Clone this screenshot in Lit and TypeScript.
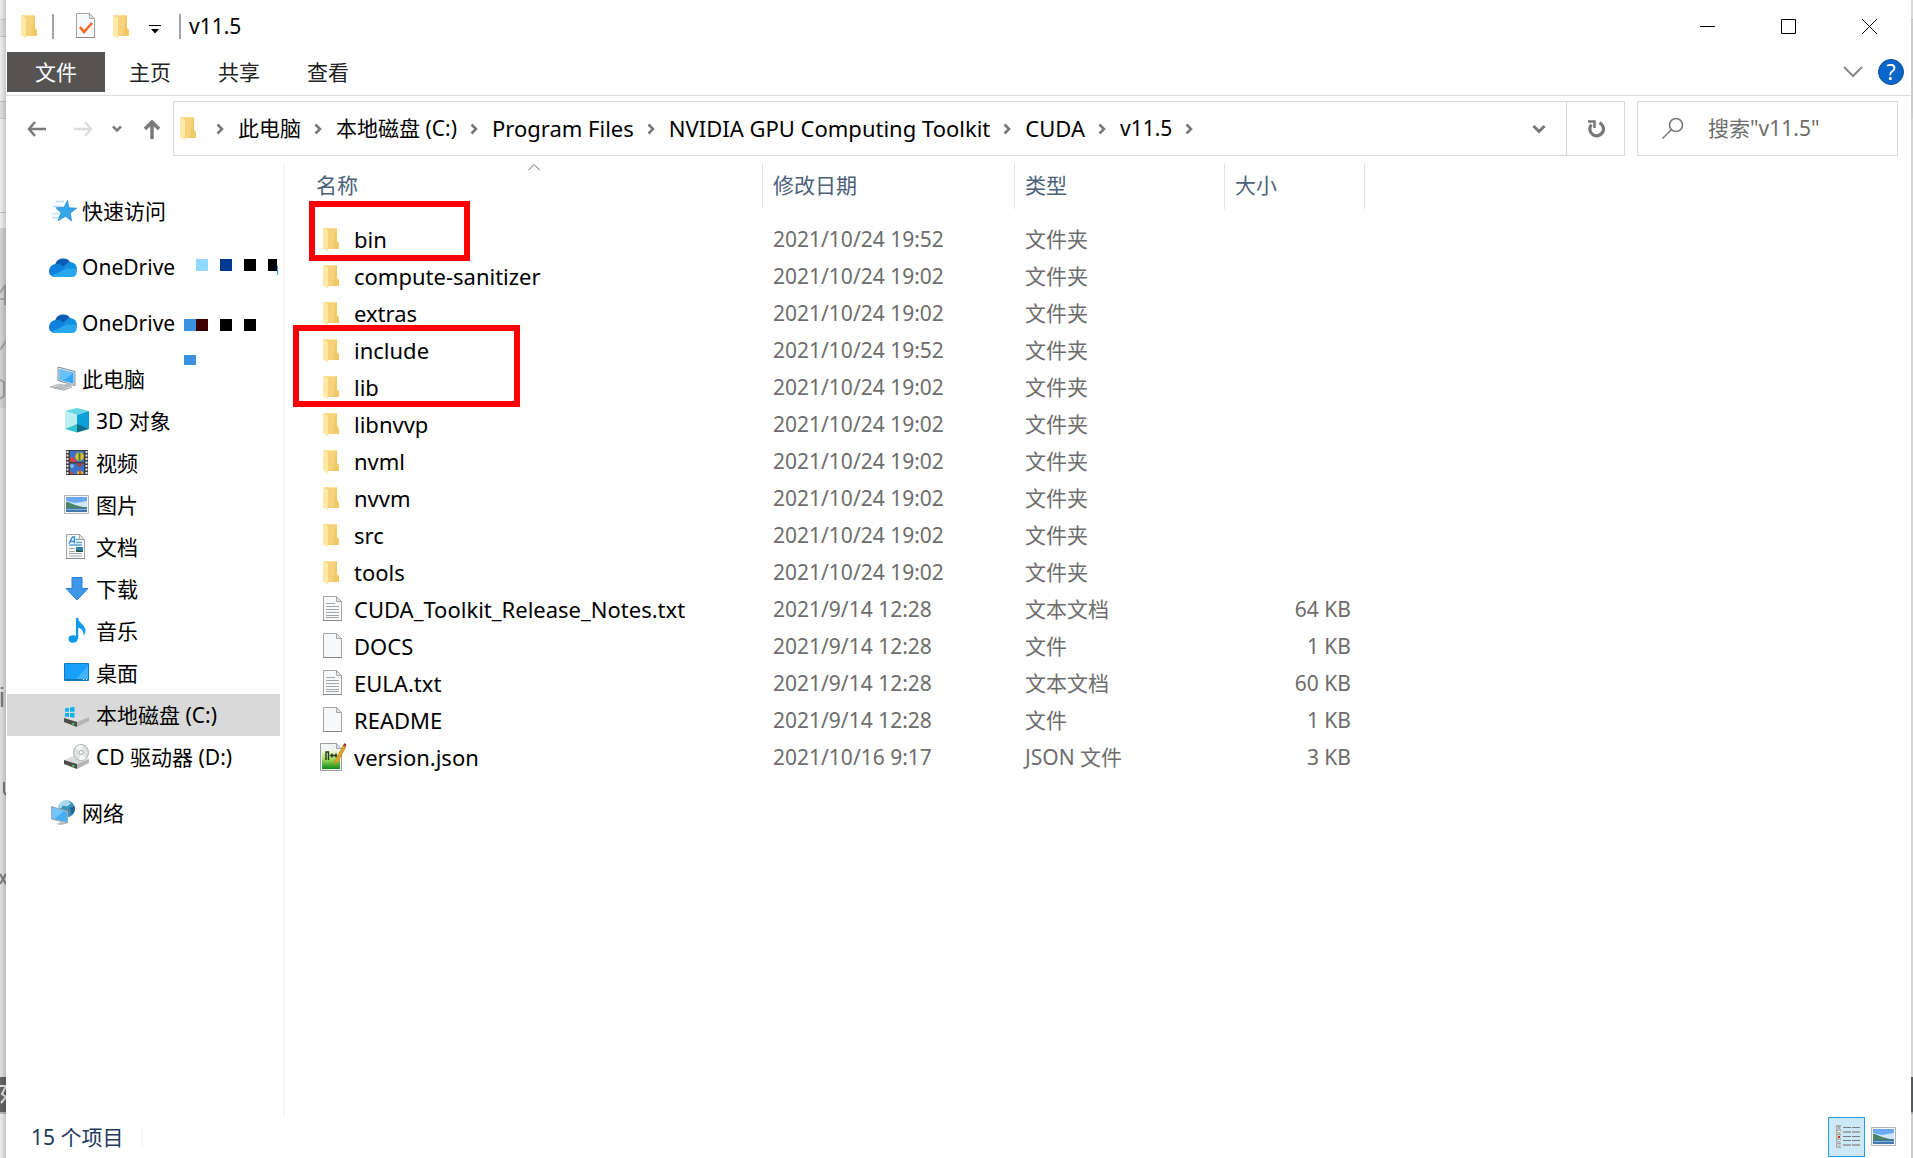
import { LitElement, html, svg, css, nothing, TemplateResult } from "lit";
import { customElement, property, state } from "lit/decorators.js";
import { classMap } from "lit/directives/class-map.js";

type Kind = "folder" | "text" | "blank" | "npp";

interface Entry {
  name: string;
  date: string;
  type: string;
  size?: string;
  kind: Kind;
}

interface Place {
  label: string;
  icon: string;
  group?: boolean;
  mosaic?: string;
}

interface Crumb {
  label: string;
  latin?: boolean;
}

const ENTRIES: Entry[] = [
  { name: "bin", date: "2021/10/24 19:52", type: "文件夹", kind: "folder" },
  { name: "compute-sanitizer", date: "2021/10/24 19:02", type: "文件夹", kind: "folder" },
  { name: "extras", date: "2021/10/24 19:02", type: "文件夹", kind: "folder" },
  { name: "include", date: "2021/10/24 19:52", type: "文件夹", kind: "folder" },
  { name: "lib", date: "2021/10/24 19:02", type: "文件夹", kind: "folder" },
  { name: "libnvvp", date: "2021/10/24 19:02", type: "文件夹", kind: "folder" },
  { name: "nvml", date: "2021/10/24 19:02", type: "文件夹", kind: "folder" },
  { name: "nvvm", date: "2021/10/24 19:02", type: "文件夹", kind: "folder" },
  { name: "src", date: "2021/10/24 19:02", type: "文件夹", kind: "folder" },
  { name: "tools", date: "2021/10/24 19:02", type: "文件夹", kind: "folder" },
  { name: "CUDA_Toolkit_Release_Notes.txt", date: "2021/9/14 12:28", type: "文本文档", size: "64 KB", kind: "text" },
  { name: "DOCS", date: "2021/9/14 12:28", type: "文件", size: "1 KB", kind: "blank" },
  { name: "EULA.txt", date: "2021/9/14 12:28", type: "文本文档", size: "60 KB", kind: "text" },
  { name: "README", date: "2021/9/14 12:28", type: "文件", size: "1 KB", kind: "blank" },
  { name: "version.json", date: "2021/10/16 9:17", type: "JSON 文件", size: "3 KB", kind: "npp" },
];

const PLACES: Place[] = [
  { label: "快速访问", icon: "star", group: true },
  { label: "OneDrive", icon: "cloud", group: true, mosaic: "a" },
  { label: "OneDrive", icon: "cloud", group: true, mosaic: "b" },
  { label: "此电脑", icon: "pc", group: true },
  { label: "3D 对象", icon: "cube" },
  { label: "视频", icon: "video" },
  { label: "图片", icon: "picture" },
  { label: "文档", icon: "document" },
  { label: "下载", icon: "download" },
  { label: "音乐", icon: "music" },
  { label: "桌面", icon: "desktop" },
  { label: "本地磁盘 (C:)", icon: "disk" },
  { label: "CD 驱动器 (D:)", icon: "cd" },
  { label: "网络", icon: "network", group: true },
];

const CRUMBS: Crumb[] = [
  { label: "此电脑" },
  { label: "本地磁盘 (C:)" },
  { label: "Program Files", latin: true },
  { label: "NVIDIA GPU Computing Toolkit", latin: true },
  { label: "CUDA", latin: true },
  { label: "v11.5" },
];

const page = svg`
  <path d="M3.500 1.500h13l5 5v19h-18z" fill="#f8f9fa" stroke="#a3a5a7"/>
  <path d="M16.500 1.500v5h5z" fill="#e3e5e7" stroke="#a3a5a7"/>
  <path d="M3 25.500h19" stroke="#858789"/>`;

const ICONS: Record<string, TemplateResult> = {
  folder: svg`
    <path d="M4 3h13v17l2 0v4h-12z" fill="#f5d27b"/>
    <path d="M16 3h1v13l2 2v6h-6z" fill="#efc965"/>
    <path d="M3 3l5 2.500v21l-5-3z" fill="#ffe9a8"/>
    <path d="M3 3h14v1h-12z" fill="#fbe092"/>`,
  blank: page,
  text: svg`${page}<path d="M6 8.500h9M6 11.500h13M6 14.500h13M6 17.500h13M6 20.500h13M6 22.500h13" stroke="#a4a6a8"/>`,
  task: svg`${page}<path d="M7 15l4 5 8-9" fill="none" stroke="#f36b21" stroke-width="2.600"/>`,
  npp: svg`
    <defs><linearGradient id="g" x1="0" y1="0" x2="0" y2="1"><stop offset="0" stop-color="#f4faee"/><stop offset=".45" stop-color="#a9e05c"/><stop offset="1" stop-color="#0d8a1c"/></linearGradient></defs>
    <path d="M.5.5h16l5 5v22h-21z" fill="#f3f4f4" stroke="#9c9e9c"/>
    <rect x="2" y="7" width="18" height="19" fill="url(#g)"/>
    <path d="M16.500.5v5h5" fill="#ddd" stroke="#a0a0a0"/>
    <path d="M6 17V9h2.500v8M10 12.500h4M12 10.500v4M14 12.500h3M16 10.500v4" fill="none" stroke="#253320" stroke-width="1.400"/>
    <path d="M14 22l1.500-5L23.500 2l2.500 1.500-8 15z" fill="#eaa224" stroke="#b77a1a" stroke-width=".6"/>
    <path d="M23 2.500l1.500-2.500 2 1.500-1.200 2.500z" fill="#9b3c3c"/>`,
  star: svg`
    <path d="M7 4.500h8M4 9.500h10M3 16.500h7M3 20.500h7" stroke="#b7dcf4" stroke-width="1.500"/>
    <path d="M18.500 3.500l1.300 7.200 8 .5-6.500 4.800 1.200 7.800-6-4.500-7.500 4.500 3-8-5-5 8-.4z" fill="#35a5ea" stroke="#2b8ed2" stroke-width=".8"/>`,
  cloud: svg`
    <path d="M6 12A8.500 8.500 0 0 1 21.500 9.500L23 14l-9 3z" fill="#0a5cb5"/>
    <path d="M0 18.500C0 14 3.500 10.800 7.500 11c2-.2 4 .3 5.500 1.300l6 4-15 7.200C1.500 23 0 21 0 18.500z" fill="#1180dc"/>
    <path d="M14.500 14.500c1.500-3.500 4.500-5.500 7.500-5.200 3.300.3 6 3 6 6.700l-6 4z" fill="#1390e4"/>
    <path d="M2.500 23L17 15.500l10.600.5c1.200 3.500-.6 8-4.600 8H6c-1.500 0-2.600-.3-3.500-1z" fill="#2aa8ee"/>`,
  pc: svg`
    <path d="M9 2l17 4.500v14L9 15.500z" fill="#e6eaed" stroke="#7e8990"/>
    <path d="M10.500 4l14 3.700v11l-14-4z" fill="#36a8f5"/>
    <path d="M10.500 4l14 3.700-10 7.800-4-1z" fill="#69c1fb"/>
    <path d="M14 20l6-2 6 1-6 3z" fill="#b9bfc4"/>
    <path d="M1 22l9-3 13 3-8 3.500z" fill="#d2d6d9" stroke="#989fa5" stroke-width=".6"/>
    <path d="M4 22l12 2.500M7 21l12 2.500M5 23.500l9-3.300M9 24.300l9-3" stroke="#989fa5" stroke-width=".6"/>`,
  cube: svg`
    <path d="M14 1l12 3-12 4L2 4z" fill="#63d7e4"/>
    <path d="M2 4l12 4v11L2 22z" fill="#bdeff0"/>
    <path d="M26 4L14 8v11l12 3z" fill="#0a9fd8"/>
    <path d="M2 22l12-5v8.500z" fill="#35c4cd"/>
    <path d="M26 22l-12-5v8.500z" fill="#0b6b88"/>`,
  video: svg`
    <path d="M3 1h22v25H3z" fill="#3e3f41"/>
    <path d="M4.500 2v24M23.500 2v24" stroke="#e8e8e8" stroke-width="2" stroke-dasharray="2 1.500"/>
    <path d="M7 2h14v11H7zM7 14.500h14V25H7z" fill="#3c6ecb"/>
    <circle cx="16.500" cy="7.500" r="4.300" fill="#e8bd2a"/><path d="M15.500 3.500h2v8h-2z" fill="#3a8a37"/>
    <path d="M7 9l3-1 4 5H7z" fill="#e04040"/><path d="M13 14.500h7l-3 4z" fill="#b83a2e"/>
    <circle cx="9" cy="17" r="2" fill="#7fb5f2"/>
    <path d="M13.800 25a3.200 3.200 0 0 1 6.400 0z" fill="#e8bd2a"/><path d="M7 22l4 3H7z" fill="#e04040"/>
    <path d="M16.200 21.800h1.600V25h-1.600z" fill="#c23b2c"/>`,
  picture: svg`
    <path d="M1.500 4.500h24v18h-24z" fill="#f7f7f7" stroke="#b1b1b3"/>
    <path d="M3 6h21v15H3z" fill="#cfe7fb"/>
    <path d="M3 6h21v4l-12 2-9-2z" fill="#6ca7f3"/>
    <path d="M3 16h21v5H3z" fill="#3f78ae"/>
    <path d="M3 11c4 0 6 2 9 3l12 3H3z" fill="#4a8463"/>
    <path d="M3 18h21v1H3z" fill="#86b3d4"/>`,
  document: svg`
    ${page}
    <path d="M6 10.500l3.500-6.500h2v6.500M7.500 8.500h4" fill="none" stroke="#2f8fd6" stroke-width="1.400"/>
    <path d="M13 6.500h3M13 9.500h6M6 12h13" stroke="#5da7dc" stroke-width="1.400"/>
    <path d="M6 15.500h6M6 18.500h6M6 20.500h13M6 23h13" stroke="#a4a6a8"/>
    <path d="M13 14h7v5h-7z" fill="#2e7fae"/><path d="M13 17l7 1v1h-7z" fill="#28543d"/>`,
  download: svg`<path d="M9 2.500h10v11h6L14 25 3 13.500h6z" fill="#3f97e8" stroke="#2b7fd0"/>`,
  music: svg`
    <ellipse cx="10" cy="22" rx="4.500" ry="3.700" fill="#0a9bf0"/>
    <path d="M13 1h2.200c0 5 7.300 6.500 7.300 12.500 0 2.500-.8 4-2 5.500.8-5-2.300-7.500-5.300-8.500v11.500H13z" fill="#0a9bf0"/>`,
  desktop: svg`
    <path d="M1.500 4.500h24v17h-24z" fill="#17a0fb" stroke="#1679bd"/>
    <path d="M12 21L25 7v14z" fill="#42b3fc"/><path d="M2 20.500h23" stroke="#1a74b0"/><path d="M20 20.500h1M23 20.500h1" stroke="#fff"/>`,
  disk: svg`
    <path d="M1 17l12-5 13 4-12 5z" fill="#dcdcdd"/>
    <path d="M1 17l13 4v5L1 21z" fill="#4a4c4e"/>
    <path d="M14 21l12-5v4l-12 6z" fill="#b4b5b7"/>
    <path d="M9 22.500l2.500.8" stroke="#47d65a" stroke-width="1.500"/>
    <path d="M2 7.500l4-.7v4H2zM7 6.600l4.500-.8v5H7zM2 12h4v4l-4-.6zM7 12h4.500v4.800L7 16z" fill="#10b2ee"/>`,
  cd: svg`
    <path d="M1 17l12-5 13 4-12 5z" fill="#dcdcdd"/>
    <path d="M1 17l13 4v5L1 21z" fill="#4a4c4e"/>
    <path d="M14 21l12-5v4l-12 6z" fill="#b4b5b7"/>
    <path d="M9 22.500l2.500.8" stroke="#47d65a" stroke-width="1.500"/>
    <ellipse cx="18" cy="9.500" rx="7.500" ry="8" fill="#dfe2e2" stroke="#a9adae"/>
    <path d="M18 9.500L13 4a7 7 0 0 1 7-1.500zM18 9.500l5 6a7 7 0 0 1-7 1.200z" fill="#f5f6f6"/>
    <circle cx="18" cy="9.500" r="2" fill="#fff" stroke="#a9adae"/>`,
  network: svg`
    <circle cx="17.500" cy="10" r="8.500" fill="#3b8fb9"/>
    <path d="M11 4a8.500 8.500 0 0 1 8-2.400l3 3-4 3-4-1-2 3-3-1z" fill="#a8dcec"/>
    <path d="M21 9l4.500-2a8.500 8.500 0 0 1-3 9z" fill="#23678f"/>
    <path d="M2.500 7.500l16 5v11.500l-16-4z" fill="#46aef5" stroke="#d7dcdf"/>
    <path d="M3 8l12 3.600L6 20l-3-.6z" fill="#74c6fb"/>
    <path d="M2.500 7.500l16 5v11.500l-16-4z" fill="none" stroke="#8b959b" stroke-width=".7"/>
    <path d="M7 25l6-2 5 1.500-6 1.500z" fill="#b5babd"/>`,
  list: svg`
    <path d="M3 2h5v23H3z" fill="#a9aaac"/>
    <path d="M4.500 4h3v2.500h-3zM4.500 8h3v3h-3zM4.500 12.500h3v3h-3zM4.500 17h3v3h-3zM4.500 21.500h3v2.500h-3z" fill="#f8f8f8"/>
    <path d="M5 5h2" stroke="#355f86"/><path d="M5 10h2" stroke="#7a6a30"/><path d="M5 14h2" stroke="#d62a2a" stroke-width="2"/><path d="M5 19h2M5 23h2" stroke="#6487a6"/>
    <path d="M10 4.500h8M19 4.500h8M10 13.500h8M19 13.500h8M10 17.500h8M19 17.500h8" stroke="#777c80"/>
    <path d="M10 9h8M19 9h8M10 22h8M19 22h8" stroke="#a0a8ad" stroke-width="2"/>`,
};

@customElement("shell-icon")
export class ShellIcon extends LitElement {
  @property() name = "folder";

  static styles = css`
    :host {
      display: block;
      flex: none;
      width: 28px;
      height: 28px;
    }
    .icon {
      display: block;
      width: 28px;
      height: 28px;
    }
  `;

  render() {
    return html`<svg class="icon" viewBox="0 0 28 28" aria-hidden="true">${ICONS[this.name] ?? nothing}</svg>`;
  }
}

@customElement("app-root")
export class AppRoot extends LitElement {
  @state() private current = 11;
  @state() private view = "details";

  static styles = css`
    :host {
      display: block;
      font-family: "Noto Sans", "Noto Sans CJK SC", sans-serif;
      font-size: 21px;
      line-height: 28px;
      color: #000;
    }
    * {
      box-sizing: border-box;
    }
    button {
      font: inherit;
      color: inherit;
      background: none;
      border: 0;
      padding: 0;
      margin: 0;
      display: flex;
      align-items: center;
      justify-content: center;
    }
    a {
      color: inherit;
      text-decoration: none;
    }
    svg {
      display: block;
      fill: none;
    }
    .screen {
      display: grid;
      grid-template-columns: 6px minmax(0, 1fr) 2px;
      min-height: 100vh;
      background: #fff;
    }
    .behind {
      position: relative;
      overflow: hidden;
      background: linear-gradient(
        #efefef 19px, #cfcfcf 19px 20px, #e3e3e3 20px 36px, #c6c6c6 36px 37px,
        #efefef 37px 101px, #c4c4c4 101px 102px, #dfdfdf 102px 118px, #c9c9c9 118px 119px,
        #efefef 119px 212px, #c9c9c9 212px 213px, #efefef 213px 228px, #d3d3d3 228px 408px,
        #e0e0e0 408px 1077px, #646464 1077px 1112px, #b8b8b8 1112px 1114px, #ececec 1114px
      );
    }
    .behind.left::after {
      content: "";
      position: absolute;
      inset: 0;
      background: linear-gradient(90deg, transparent, rgba(0, 0, 0, 0.16));
    }
    .behind.right {
      background: linear-gradient(
        #d9d9d9 19px, #bdbdbd 19px 20px, #cdcdcd 20px 118px, #d5d5d5 118px 1077px,
        #55585a 1077px 1112px, #a5a5a5 1112px 1114px, #cdcdcd 1114px
      );
    }
    .scraps {
      position: absolute;
      top: 0;
      left: 0;
      width: 6px;
      height: 1158px;
    }
    .window {
      display: grid;
      grid-template-rows: 52px 44px 59px minmax(0, 1fr) 42px;
      min-width: 0;
      background: #fff;
    }
    .titlebar {
      display: flex;
      align-items: center;
      padding: 0 1px 0 12px;
    }
    .rule {
      width: 2px;
      height: 25px;
      background: #a3a3a3;
    }
    .titlebar .rule.first {
      margin: 0 19px 0 6px;
    }
    .titlebar .more {
      width: 32px;
      height: 28px;
      margin: 0 8px 0 1px;
    }
    .more svg {
      margin-top: 7px;
    }
    .titlebar .task {
      margin-right: 9px;
    }
    .title {
      margin: 0 auto 0 8px;
      font-size: 21px;
      font-weight: 400;
    }
    .caption {
      width: 81px;
      height: 52px;
    }
    .ribbon {
      display: flex;
      align-items: center;
      gap: 1px;
      border-bottom: 1px solid #dadbdc;
      padding: 0 7px 3px 1px;
    }
    .tab {
      height: 40px;
      padding: 0 23px;
      color: #222;
    }
    .tab.file {
      width: 98px;
      background: #555452;
      color: #fff;
    }
    .ribbon .expand {
      margin-left: auto;
      width: 48px;
      height: 40px;
    }
    .help {
      width: 26px;
      height: 26px;
      border-radius: 50%;
      background: #0a66c8;
      border: 1px solid #07509f;
      color: #fff;
      line-height: 24px;
    }
    .navbar {
      display: flex;
      align-items: flex-start;
      padding: 5px 13px 0 19px;
    }
    .navbar .go {
      height: 55px;
    }
    .back {
      width: 23px;
    }
    .forward {
      width: 23px;
      margin-left: 23px;
    }
    .recent {
      width: 14px;
      margin-left: 16px;
    }
    .up {
      width: 22px;
      margin: 0 10px 0 17px;
    }
    .address {
      flex: 1;
      min-width: 0;
      height: 55px;
      display: flex;
      align-items: center;
      border: 1px solid #d9d9d9;
      margin-right: 12px;
    }
    .crumbs {
      display: flex;
      align-items: center;
      list-style: none;
      margin: 0 auto 0 0;
      padding: 0 0 2px 3px;
      white-space: nowrap;
    }
    .crumbs li {
      display: flex;
      align-items: center;
    }
    .crumbs .sep {
      margin: 2px 14px 0 13px;
    }
    .crumbs .root .sep {
      margin-left: 11px;
    }
    .latin {
      font-size: 22px;
    }
    .drop {
      width: 54px;
      height: 53px;
    }
    .refresh {
      width: 58px;
      height: 53px;
      border-left: 1px solid #d9d9d9;
    }
    .search {
      width: 261px;
      height: 55px;
      display: flex;
      align-items: center;
      gap: 24px;
      border: 1px solid #d9d9d9;
      padding: 0 0 2px 24px;
    }
    .query {
      flex: 1;
      min-width: 0;
      border: 0;
      padding: 0;
      outline: 0;
      background: none;
      font: inherit;
      color: #6d6d6d;
    }
    .query::placeholder {
      color: #6d6d6d;
      opacity: 1;
    }
    .body {
      display: grid;
      grid-template-columns: 279px minmax(0, 1fr);
      padding-top: 8px;
    }
    .places {
      border-right: 2px solid #f5f5f5;
      padding: 13px 3px 0 1px;
    }
    .places ul {
      list-style: none;
      margin: 0;
      padding: 0;
    }
    .place {
      display: flex;
      align-items: center;
      gap: 5px;
      height: 42px;
      padding-left: 56px;
      white-space: nowrap;
    }
    .place.group {
      padding-left: 42px;
      margin-top: 14px;
    }
    .place.selected {
      background: #d9d9d9;
    }
    .mosaic {
      margin-left: 4px;
      width: 94px;
      height: 48px;
    }
    .mosaic.b {
      margin-top: 40px;
    }
    .files {
      position: relative;
      min-width: 0;
    }
    table {
      width: 100%;
      table-layout: fixed;
      border-collapse: separate;
      border-spacing: 0;
      white-space: nowrap;
    }
    .c-name {
      width: 478px;
    }
    .c-date {
      width: 252px;
    }
    .c-type {
      width: 210px;
    }
    .c-size {
      width: 140px;
    }
    th {
      position: relative;
      height: 46px;
      padding: 0;
      font-weight: 400;
      color: #4c607a;
      border-right: 1px solid #e3e3e3;
    }
    th.rest {
      border: 0;
    }
    th button {
      width: 100%;
      height: 46px;
      justify-content: flex-start;
      padding: 0 0 2px 10px;
    }
    th.name button {
      padding-left: 31px;
    }
    .sort {
      position: absolute;
      top: 0;
      left: 243px;
    }
    tbody::before {
      content: "";
      display: block;
      height: 11px;
    }
    td {
      height: 37px;
      padding: 0 0 0 10px;
      color: #6d6d6d;
    }
    td.name {
      padding-left: 35px;
      color: #000;
      font-size: 22px;
    }
    .file-name {
      display: flex;
      align-items: center;
      gap: 6px;
    }
    td.size {
      text-align: right;
      padding-right: 14px;
    }
    .mark {
      position: absolute;
      border: 6px solid #fe0000;
      pointer-events: none;
    }
    .mark.one {
      left: 24px;
      top: 38px;
      width: 161px;
      height: 60px;
    }
    .mark.two {
      left: 8px;
      top: 162px;
      width: 227px;
      height: 82px;
    }
    .status {
      display: flex;
      align-items: center;
      padding: 0 9px 0 25px;
      color: #1e3a5f;
    }
    .count {
      padding-right: 18px;
      margin-right: auto;
      border-right: 2px solid #f5f5f5;
      line-height: 20px;
    }
    .view {
      width: 37px;
      height: 40px;
    }
    .view.on {
      background: #cce8f6;
      border: 1px solid #26a0da;
    }
  `;

  private crumbSep() {
    return html`<svg class="sep" width="8" height="12" viewBox="0 0 8 12" aria-hidden="true">
      <path d="M1.500 1.500L6 6l-4.500 4.500" stroke="#777" stroke-width="2.500" />
    </svg>`;
  }

  private mosaic(kind: string) {
    return html`<svg class="mosaic ${kind}" viewBox="0 0 94 48" aria-hidden="true">
      ${kind === "a"
        ? svg`<path d="M12 16h12v12H12z" fill="#8fd9ff"/><path d="M36 16h12v12H36z" fill="#00398f"/>
            <path d="M60 16h12v12H60zM84 16h9v12h-9z" fill="#000"/><path d="M93 23h1v9h-1z" fill="#3b91dc"/>`
        : svg`<path d="M0 0h12v12H0zM0 36h12v10H0z" fill="#3b91dc"/><path d="M12 0h12v12H12z" fill="#3a0000"/>
            <path d="M36 0h12v12H36zM60 0h12v12H60z" fill="#000"/>`}
    </svg>`;
  }

  private titleBar() {
    return html`<header class="titlebar">
      <shell-icon name="folder"></shell-icon>
      <span class="rule first"></span>
      <button class="task" aria-label="属性"><shell-icon name="task"></shell-icon></button>
      <button aria-label="新建文件夹"><shell-icon name="folder"></shell-icon></button>
      <button class="more" aria-label="自定义快速访问工具栏">
        <svg width="12" height="9" viewBox="0 0 12 9"><path d="M0 .5h12" stroke="#000" /><path d="M2 4h8L6 8.500z" fill="#000" /></svg>
      </button>
      <span class="rule"></span>
      <h1 class="title">v11.5</h1>
      <button class="caption" aria-label="最小化">
        <svg width="15" height="15"><path d="M0 7.500h15" stroke="#000" /></svg>
      </button>
      <button class="caption" aria-label="最大化">
        <svg width="15" height="15"><path d="M.5.5h14v14H.5z" stroke="#000" /></svg>
      </button>
      <button class="caption" aria-label="关闭">
        <svg width="15" height="15"><path d="M0 0l15 15M15 0L0 15" stroke="#000" /></svg>
      </button>
    </header>`;
  }

  private ribbon() {
    return html`<nav class="ribbon">
      <button class="tab file">文件</button>
      <button class="tab">主页</button>
      <button class="tab">共享</button>
      <button class="tab">查看</button>
      <button class="expand" aria-label="展开功能区">
        <svg width="20" height="12"><path d="M1 1l9 9 9-9" stroke="#8a8a8a" stroke-width="2" /></svg>
      </button>
      <button class="help" aria-label="帮助">?</button>
    </nav>`;
  }

  private navBar() {
    return html`<div class="navbar">
      <button class="go back" aria-label="后退">
        <svg width="20" height="16"><path d="M8 1L2 8l6 7M2 8h17" stroke="#7a7a7a" stroke-width="2.500" /></svg>
      </button>
      <button class="go forward" aria-label="前进">
        <svg width="20" height="16"><path d="M12 1l6 7-6 7M18 8H1" stroke="#dcdcdc" stroke-width="2.500" /></svg>
      </button>
      <button class="go recent" aria-label="最近的位置">
        <svg width="10" height="8"><path d="M1 1.500l4 4 4-4" stroke="#7a7a7a" stroke-width="2.500" /></svg>
      </button>
      <button class="go up" aria-label="上移">
        <svg width="18" height="20"><path d="M9 20V3M2 10l7-7 7 7" stroke="#7a7a7a" stroke-width="3.500" /></svg>
      </button>
      <div class="address">
        <ol class="crumbs">
          <li class="root"><shell-icon name="folder"></shell-icon>${this.crumbSep()}</li>
          ${CRUMBS.map((c) => html`<li><a class=${classMap({ latin: !!c.latin })} href="#">${c.label}</a>${this.crumbSep()}</li>`)}
        </ol>
        <button class="drop" aria-label="以前的位置">
          <svg width="14" height="10"><path d="M1.500 2L7 7.500 12.500 2" stroke="#777" stroke-width="3" /></svg>
        </button>
        <button class="refresh" aria-label="刷新">
          <svg width="18" height="18">
            <path d="M12.500 2.800A6.800 6.800 0 1 1 4.500 4.500" stroke="#777" stroke-width="3.200" />
            <path d="M1 1.500h6.500V8" stroke="#777" stroke-width="2.500" />
          </svg>
        </button>
      </div>
      <label class="search">
        <svg width="22" height="22" aria-hidden="true">
          <circle cx="14" cy="8" r="6.500" stroke="#777" stroke-width="1.500" />
          <path d="M9.500 12.500L.5 21.500" stroke="#777" stroke-width="1.500" />
        </svg>
        <input class="query" type="text" placeholder='搜索"v11.5"' aria-label="搜索" />
      </label>
    </div>`;
  }

  private places() {
    return html`<nav class="places">
      <ul>
        ${PLACES.map(
          (p, i) => html`<li>
            <a
              href="#"
              class=${classMap({ place: true, group: !!p.group, selected: i === this.current })}
              @click=${(e: Event) => {
                e.preventDefault();
                this.current = i;
              }}
              ><shell-icon name=${p.icon}></shell-icon><span>${p.label}</span>${p.mosaic ? this.mosaic(p.mosaic) : nothing}</a
            >
          </li>`,
        )}
      </ul>
    </nav>`;
  }

  private files() {
    return html`<main class="files">
      <table>
        <colgroup>
          <col class="c-name" />
          <col class="c-date" />
          <col class="c-type" />
          <col class="c-size" />
          <col />
        </colgroup>
        <thead>
          <tr>
            <th class="name" aria-sort="ascending">
              <button>名称</button>
              <svg class="sort" width="12" height="8" aria-hidden="true"><path d="M.5 7L6 1.500 11.500 7" stroke="#666" /></svg>
            </th>
            <th><button>修改日期</button></th>
            <th><button>类型</button></th>
            <th><button>大小</button></th>
            <th class="rest"></th>
          </tr>
        </thead>
        <tbody>
          ${ENTRIES.map(
            (f) => html`<tr>
              <td class="name">
                <div class="file-name"><shell-icon name=${f.kind}></shell-icon><span>${f.name}</span></div>
              </td>
              <td>${f.date}</td>
              <td>${f.type}</td>
              <td class="size">${f.size ?? nothing}</td>
              <td></td>
            </tr>`,
          )}
        </tbody>
      </table>
      <div class="mark one"></div>
      <div class="mark two"></div>
    </main>`;
  }

  render() {
    return html`<div class="screen">
      <div class="behind left">
        <svg class="scraps" viewBox="0 0 6 1158" aria-hidden="true">
          <path d="M0 299h6M5 285v20M0 293l5-8M0 350l6-9M0 380l4 2v14l-4 3" stroke="#a9a5a5" stroke-width="2" />
          <path d="M2 692v15M2 687v2" stroke="#7d7d7d" stroke-width="2.500" />
          <path d="M4 782v10l2 3" stroke="#7d7d7d" stroke-width="2" />
          <path d="M0 874l6 10M0 884l6-10" stroke="#7d7d7d" stroke-width="2" />
          <path d="M0 1086h6l-4 8 4 3-5 6" stroke="#e6e6e6" stroke-width="2" />
        </svg>
      </div>
      <div class="window">
        ${this.titleBar()} ${this.ribbon()} ${this.navBar()}
        <div class="body">${this.places()} ${this.files()}</div>
        <footer class="status">
          <span class="count">15 个项目</span>
          <button
            class=${classMap({ view: true, on: this.view === "details" })}
            aria-label="详细信息"
            @click=${() => (this.view = "details")}
          >
            <shell-icon name="list"></shell-icon>
          </button>
          <button
            class=${classMap({ view: true, on: this.view === "large" })}
            aria-label="大图标"
            @click=${() => (this.view = "large")}
          >
            <shell-icon name="picture"></shell-icon>
          </button>
        </footer>
      </div>
      <div class="behind right"></div>
    </div>`;
  }
}
